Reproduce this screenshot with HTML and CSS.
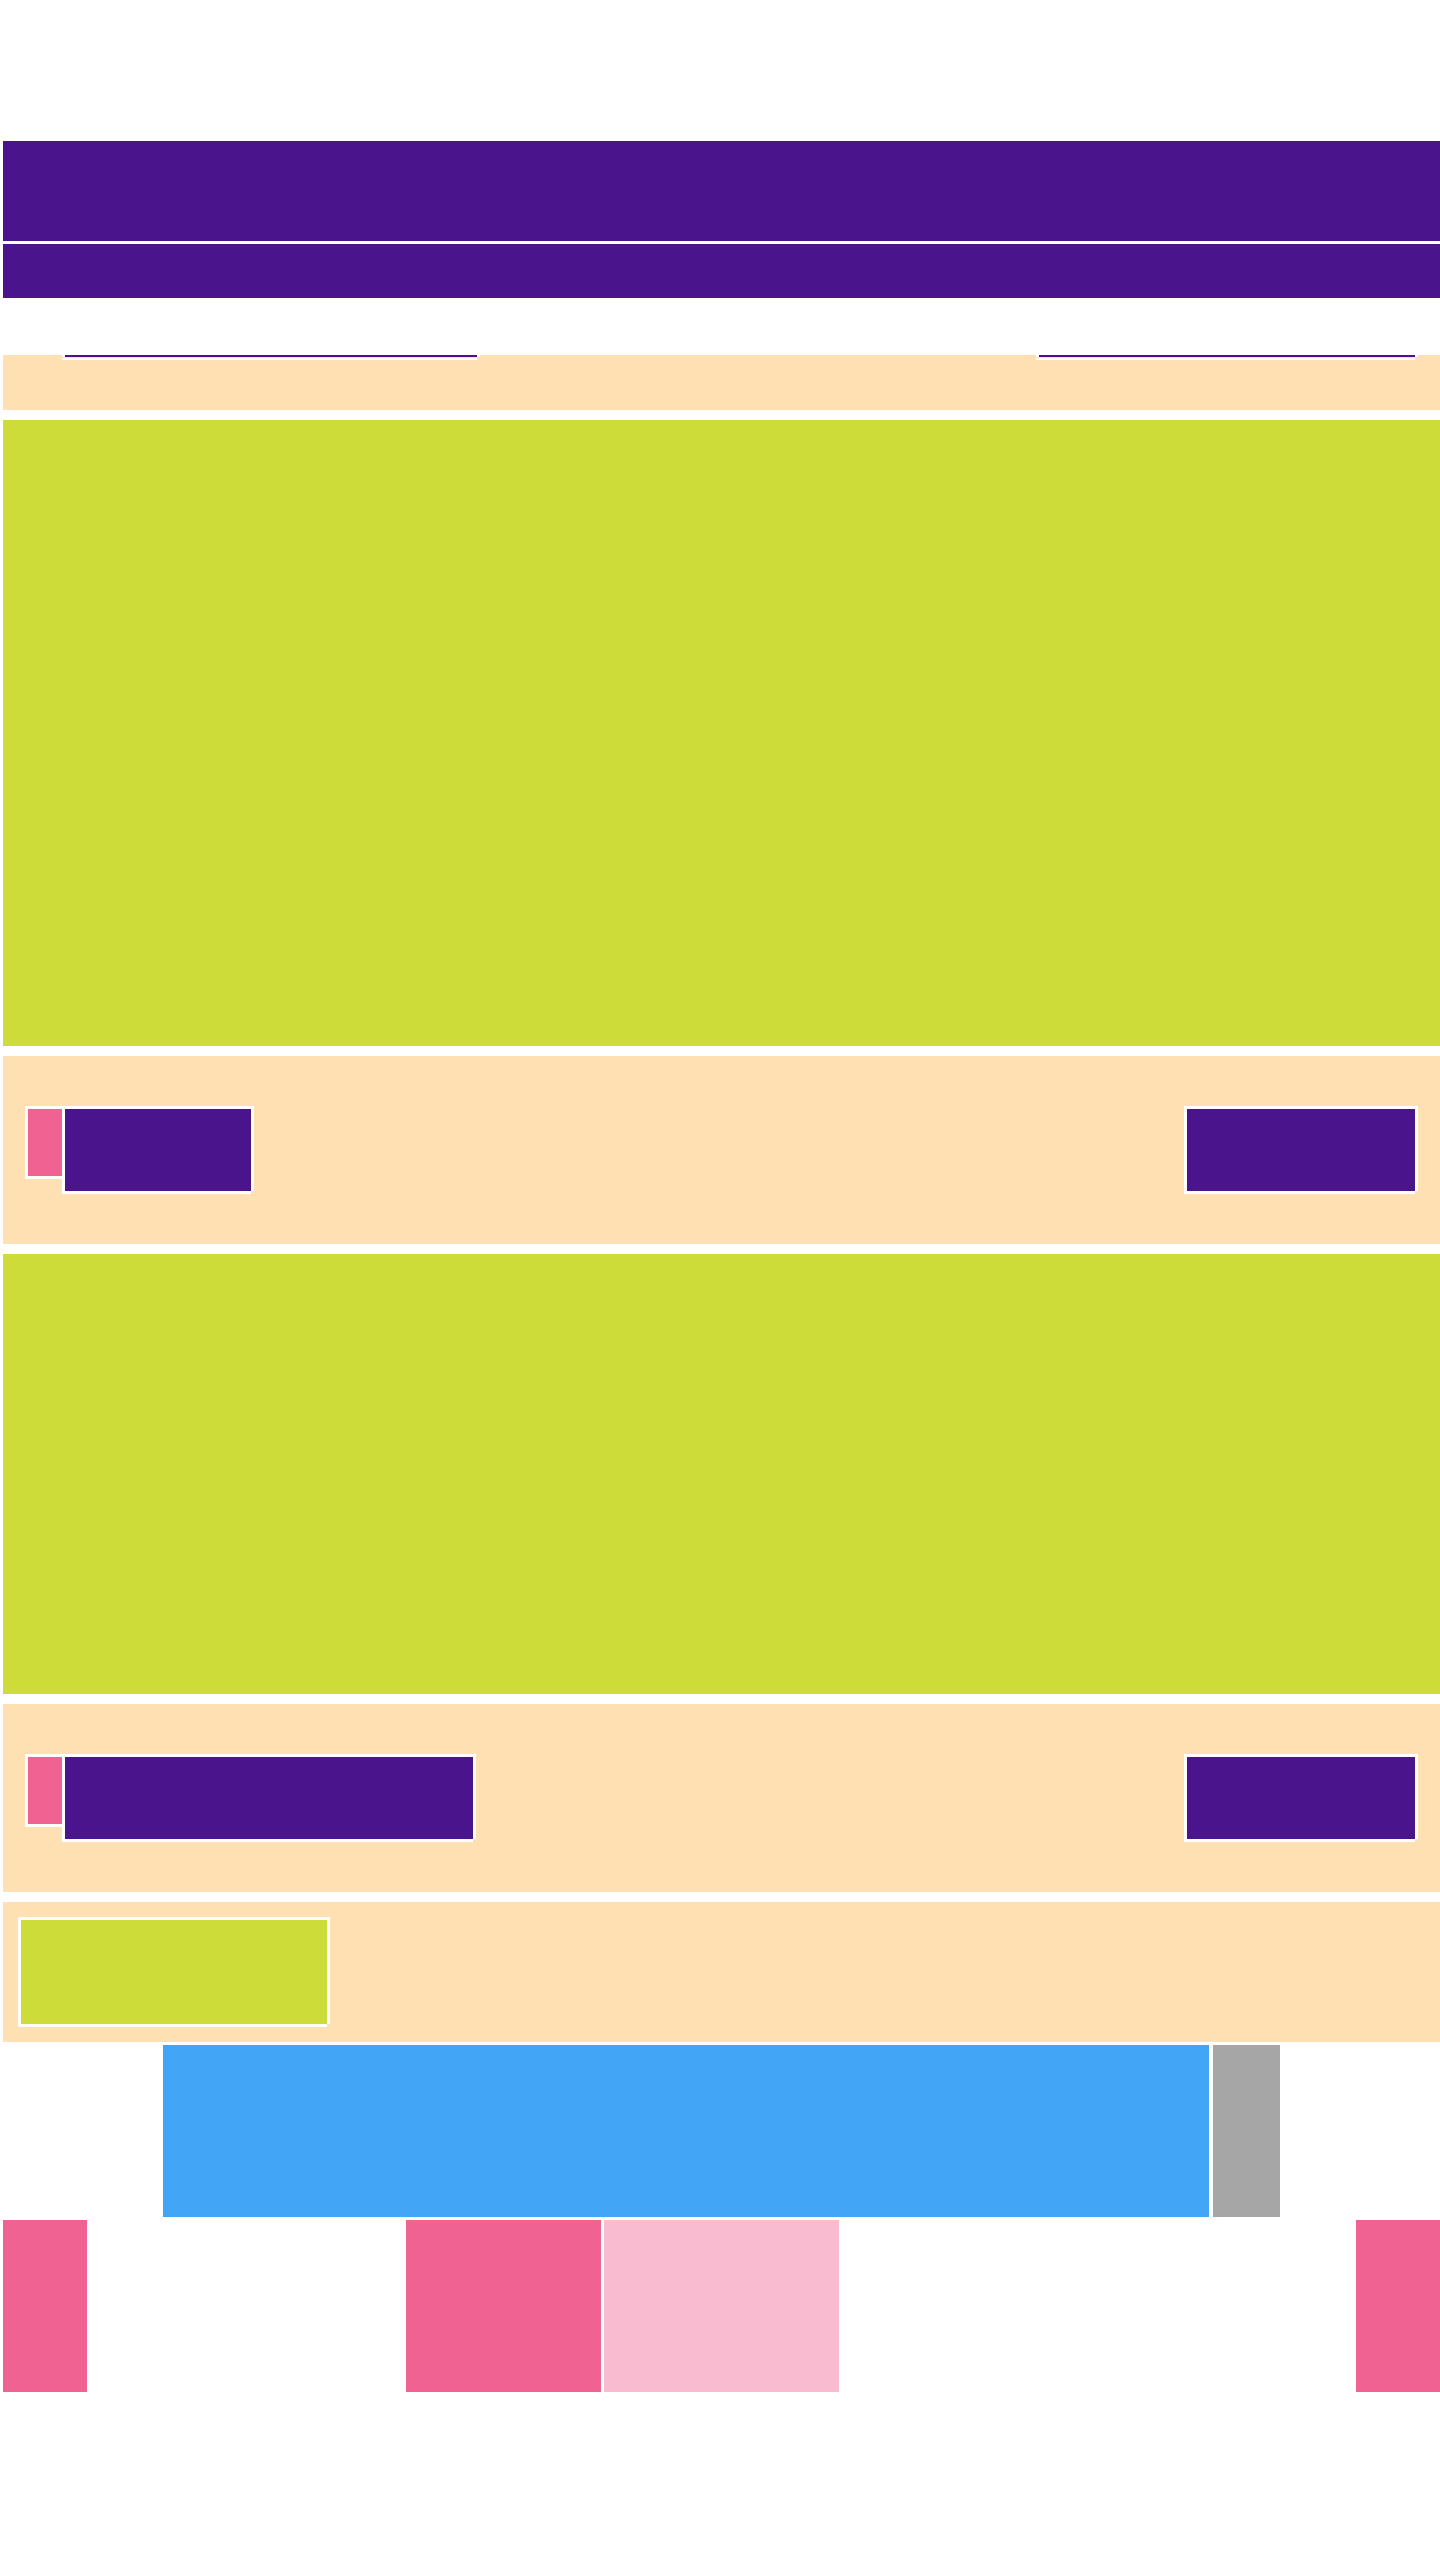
FILE: index.html
```html
<!DOCTYPE html>
<html lang="en">
<head>
    <meta charset="UTF-8">
    <meta name="viewport" content="width=device-width, initial-scale=1.0">
    <title>Layout</title>
    <link rel="stylesheet" href="styles.css">
</head>
<body>
    <div class="page">
        <div class="masthead"></div>
        <div class="nav"></div>

        <div class="tabs">
            <div class="tab tab-left"></div>
            <div class="tab tab-right"></div>
        </div>

        <div class="hero"></div>

        <div class="row">
            <div class="row-left">
                <div class="badge"></div>
                <div class="btn btn-small"></div>
            </div>
            <div class="btn btn-end"></div>
        </div>

        <div class="hero hero-short"></div>

        <div class="row">
            <div class="row-left">
                <div class="badge"></div>
                <div class="btn btn-wide"></div>
            </div>
            <div class="btn btn-end"></div>
        </div>

        <div class="row row-compact">
            <div class="card"></div>
        </div>

        <div class="strip">
            <div class="strip-main"></div>
            <div class="strip-side"></div>
        </div>

        <div class="tiles">
            <div class="tile tile-edge"></div>
            <div class="tile tile-mid"></div>
            <div class="tile tile-light"></div>
            <div class="tile tile-edge tile-last"></div>
        </div>
    </div>
</body>
</html>
```

FILE: styles.css
```css
* {
    box-sizing: border-box;
}

body {
    margin: 0;
    background-color: #fff;
    font-family: "Liberation Sans", Arial, sans-serif;
}

.page {
    display: flex;
    flex-direction: column;
    padding: 141px 0 0 3px;
}

.masthead {
    height: 100px;
    background-color: #4a148c; /* deep purple */
}

.nav {
    height: 54px;
    margin-top: 3px;
    background-color: #4a148c;
}

/* peach strip with the two tab underlines */
.tabs {
    display: flex;
    justify-content: space-between;
    align-items: flex-start;
    height: 55px;
    margin-top: 57px;
    padding: 0 25px 0 59px;
    background-color: #ffe0b2;
}

.tab {
    height: 2px;
    background-color: #4a148c;
    border-left: 3px solid #fff;
    box-shadow: 3px 0 #fff, 0 3px #fff;
}

.tab-left {
    width: 415px;
}

.tab-right {
    width: 379px;
}

.hero {
    height: 626px;
    margin-top: 10px;
    background-color: #cddc39; /* lime */
}

.hero-short {
    height: 440px;
}

.row {
    display: flex;
    justify-content: space-between;
    align-items: flex-start;
    height: 188px;
    margin-top: 10px;
    padding: 50px 25px 0 22px;
    background-color: #ffe0b2;
}

.row-left {
    display: flex;
    align-items: flex-start;
}

.badge {
    width: 37px;
    height: 70px;
    background-color: #f06292;
    border-left: 3px solid #fff;
    border-top: 3px solid #fff;
    box-shadow: 0 3px #fff;
}

.btn {
    height: 85px;
    background-color: #4a148c;
    border-left: 3px solid #fff;
    border-top: 3px solid #fff;
    box-shadow: 3px 0 #fff, 0 3px #fff;
}

.btn-small {
    width: 189px;
}

.btn-wide {
    width: 411px;
}

.btn-end {
    width: 231px;
}

.row-compact {
    height: 140px;
    padding: 15px 0 0 15px;
}

.card {
    width: 309px;
    height: 107px;
    background-color: #cddc39;
    border-left: 3px solid #fff;
    border-top: 3px solid #fff;
    box-shadow: 3px 0 #fff, 0 3px #fff;
}

.strip {
    display: flex;
    gap: 4px;
    height: 172px;
    margin-top: 3px;
    padding-left: 160px;
}

.strip-main {
    width: 1046px;
    background-color: #42a5f5; /* blue */
}

.strip-side {
    width: 67px;
    background-color: #a6a6a6;
}

.tiles {
    display: flex;
    gap: 3px;
    height: 172px;
    margin-top: 3px;
}

.tile-edge {
    width: 84px;
    background-color: #f06292;
}

.tile-mid {
    width: 195px;
    margin-left: 316px;
    background-color: #f06292;
}

.tile-light {
    width: 235px;
    background-color: #f8bbd0;
}

.tile-last {
    margin-left: auto;
}
```
